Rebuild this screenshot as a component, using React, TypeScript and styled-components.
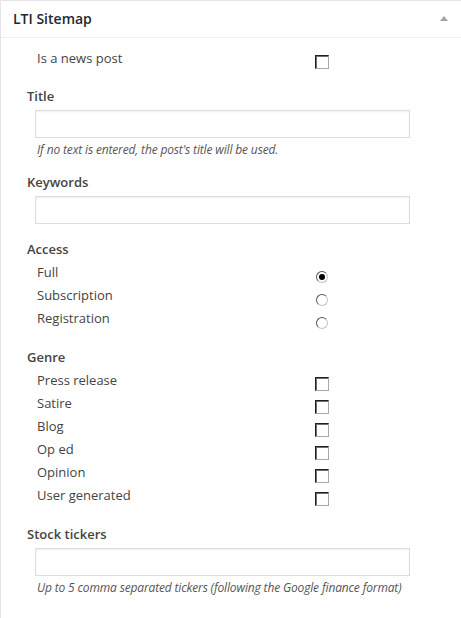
import React from "react";
import styled, { createGlobalStyle } from "styled-components";

const Global = createGlobalStyle`
  html, body { margin: 0; padding: 0; background: #fff; overflow: hidden; }
  body { font-family: "Open Sans", "Liberation Sans", sans-serif; color: #444; }
`;

const Panel = styled.div`
  border-top: 1px solid #e5e5e5;
  border-left: 1px solid #e5e5e5;
  background: #fff;
  min-height: 617px;
`;

const Header = styled.div`
  height: 36px;
  border-bottom: 1px solid #eee;
  display: flex;
  align-items: center;
  justify-content: space-between;
  padding: 0 13px 0 12px;
`;

const HeaderTitle = styled.h2`
  margin: 0;
  font-size: 14px;
  font-weight: 600;
  line-height: 1.4;
  color: #23282d;
`;

const Toggle = styled.span`
  width: 0;
  height: 0;
  border-left: 4px solid transparent;
  border-right: 4px solid transparent;
  border-bottom: 5px solid #a0a5aa;
  margin-top: -2px;
`;

const Body = styled.div`
  padding: 9px 12px 12px 26px;
`;

const Section = styled.div<{ $gap?: number }>`
  margin-top: ${(p) => p.$gap ?? 0}px;
`;

const Heading = styled.div`
  font-size: 13px;
  font-weight: 600;
  line-height: 23px;
  color: #444;
`;

const OptionList = styled.div`
  padding-left: 10px;
`;

const OptionRow = styled.label`
  display: grid;
  grid-template-columns: 278px 14px;
  height: 23px;
  font-size: 13px;
  line-height: 23px;
  color: #444;
`;

const Box = styled.span`
  box-sizing: border-box;
  width: 14px;
  height: 14px;
  margin-top: 8px;
  border: 1px solid;
  border-color: #1e1e1e #a8a8a8 #a8a8a8 #1e1e1e;
  box-shadow: inset 1px 1px 0 #6f6f6f;
  background: #fff;
`;

const Radio = styled.span<{ $checked?: boolean }>`
  box-sizing: border-box;
  width: 12px;
  height: 12px;
  margin: 10px 0 0 1px;
  border-radius: 50%;
  border: 1px solid;
  border-color: #555 #c4c4c4 #c4c4c4 #555;
  background: #fff;
  display: flex;
  align-items: center;
  justify-content: center;
  &::after {
    content: "";
    display: ${(p) => (p.$checked ? "block" : "none")};
    width: 6px;
    height: 6px;
    border-radius: 50%;
    background: #000;
  }
`;

const TextInput = styled.input`
  box-sizing: border-box;
  display: block;
  width: 375px;
  height: 28px;
  margin: 2px 0 0 8px;
  border: 1px solid #ddd;
  box-shadow: inset 0 1px 2px rgba(0, 0, 0, 0.07);
  background: #fff;
  outline: none;
  padding: 3px 5px;
  font: inherit;
`;

const Help = styled.p`
  margin: 3px 0 0 10px;
  font-size: 12px;
  letter-spacing: -0.15px;
  line-height: 18px;
  font-style: italic;
  color: #555;
`;

type Opt = { label: string; checked?: boolean };

const access: Opt[] = [
  { label: "Full", checked: true },
  { label: "Subscription" },
  { label: "Registration" },
];

const genres: Opt[] = [
  { label: "Press release" },
  { label: "Satire" },
  { label: "Blog" },
  { label: "Op ed" },
  { label: "Opinion" },
  { label: "User generated" },
];

export default function App() {
  return (
    <>
      <Global />
      <Panel>
        <Header>
          <HeaderTitle>LTI Sitemap</HeaderTitle>
          <Toggle />
        </Header>
        <Body>
          <OptionList>
            <OptionRow>
              <span>Is a news post</span>
              <Box />
            </OptionRow>
          </OptionList>

          <Section $gap={15}>
            <Heading>Title</Heading>
            <TextInput type="text" />
            <Help>If no text is entered, the post's title will be used.</Help>
          </Section>

          <Section $gap={12}>
            <Heading>Keywords</Heading>
            <TextInput type="text" />
          </Section>

          <Section $gap={14}>
            <Heading>Access</Heading>
            <OptionList>
              {access.map((o) => (
                <OptionRow key={o.label}>
                  <span>{o.label}</span>
                  <Radio $checked={o.checked} />
                </OptionRow>
              ))}
            </OptionList>
          </Section>

          <Section $gap={16}>
            <Heading>Genre</Heading>
            <OptionList>
              {genres.map((o) => (
                <OptionRow key={o.label}>
                  <span>{o.label}</span>
                  <Box />
                </OptionRow>
              ))}
            </OptionList>
          </Section>

          <Section $gap={16}>
            <Heading>Stock tickers</Heading>
            <TextInput type="text" />
            <Help>Up to 5 comma separated tickers (following the Google finance format)</Help>
          </Section>
        </Body>
      </Panel>
    </>
  );
}
